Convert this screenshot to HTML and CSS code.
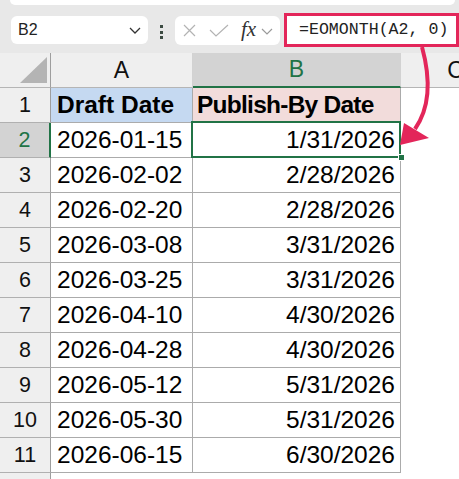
FILE: index.html
```html
<!DOCTYPE html>
<html>
<head>
<meta charset="utf-8">
<link rel="stylesheet" href="styles.css">
</head>
<body>
<div class="app">
  <div class="topstrip"></div>
  <div class="toolbar">
    <div class="namebox">
      <span class="ref">B2</span>
      <svg class="chev" width="12" height="7" viewBox="0 0 12 7"><path d="M1 1 L6 6 L11 1" fill="none" stroke="#333" stroke-width="1.3"/></svg>
    </div>
    <div class="dots"><i></i><i></i><i></i></div>
    <div class="fxbox">
      <svg class="ico" width="13" height="13" viewBox="0 0 13 13"><path d="M1 1 L12 12 M12 1 L1 12" stroke="#b3b3b3" stroke-width="1.2" fill="none"/></svg>
      <svg class="ico check" width="20" height="13" viewBox="0 0 20 13"><path d="M1 6 L7 12 L19 1" stroke="#b3b3b3" stroke-width="1.2" fill="none"/></svg>
      <span class="fx">fx</span>
      <svg class="chev2" width="12" height="7" viewBox="0 0 12 7"><path d="M1 1 L6 6 L11 1" fill="none" stroke="#9a9a9a" stroke-width="1.2"/></svg>
    </div>
    <div class="formula">=EOMONTH(A2, 0)</div>
  </div>
  <div class="sheet">
    <div class="corner"><span class="tri"></span></div>
    <div class="colh">A</div>
    <div class="colh sel">B</div>
    <div class="colh">C</div>

    <div class="rowh">1</div>
    <div class="cell hdr-a">Draft Date</div>
    <div class="cell hdr-b">Publish-By Date</div>
    <div class="blank"></div>

    <div class="rowh sel">2</div>
    <div class="cell">2026-01-15</div>
    <div class="cell num active">1/31/2026</div>
    <div class="blank"></div>

    <div class="rowh">3</div>
    <div class="cell">2026-02-02</div>
    <div class="cell num">2/28/2026</div>
    <div class="blank"></div>

    <div class="rowh">4</div>
    <div class="cell">2026-02-20</div>
    <div class="cell num">2/28/2026</div>
    <div class="blank"></div>

    <div class="rowh">5</div>
    <div class="cell">2026-03-08</div>
    <div class="cell num">3/31/2026</div>
    <div class="blank"></div>

    <div class="rowh">6</div>
    <div class="cell">2026-03-25</div>
    <div class="cell num">3/31/2026</div>
    <div class="blank"></div>

    <div class="rowh">7</div>
    <div class="cell">2026-04-10</div>
    <div class="cell num">4/30/2026</div>
    <div class="blank"></div>

    <div class="rowh">8</div>
    <div class="cell">2026-04-28</div>
    <div class="cell num">4/30/2026</div>
    <div class="blank"></div>

    <div class="rowh">9</div>
    <div class="cell">2026-05-12</div>
    <div class="cell num">5/31/2026</div>
    <div class="blank"></div>

    <div class="rowh">10</div>
    <div class="cell">2026-05-30</div>
    <div class="cell num">5/31/2026</div>
    <div class="blank"></div>

    <div class="rowh">11</div>
    <div class="cell">2026-06-15</div>
    <div class="cell num">6/30/2026</div>
    <div class="blank"></div>

    <div class="rowh"></div>
    <div class="blank"></div>
    <div class="blank"></div>
    <div class="blank"></div>
  </div>
  <svg class="arrow" width="459" height="479" viewBox="0 0 459 479">
    <path d="M422 47 C 430 76, 431 106, 415 129" fill="none" stroke="#e3265a" stroke-width="4"/>
    <polygon points="400,145 404,123 429,138" fill="#e3265a"/>
  </svg>
</div>
</body>
</html>
```
FILE: styles.css
```css
html, body {
  margin: 0;
  padding: 0;
}
body {
  width: 459px;
  height: 479px;
  overflow: hidden;
  background: #e8e8e8;
  font-family: "Liberation Sans", Arial, sans-serif;
}
.app {
  position: relative;
  width: 459px;
  height: 479px;
  overflow: hidden;
}
.topstrip {
  height: 5px;
  margin: 0 4px 0 10px;
  background: #ffffff;
  border-radius: 0 0 7px 7px;
}
.toolbar {
  height: 48px;
  box-sizing: border-box;
  padding-top: 11px;
  display: flex;
  align-items: flex-start;
}
.namebox {
  margin-left: 11px;
  width: 137px;
  height: 28px;
  box-sizing: border-box;
  background: #fff;
  border-radius: 6px;
  display: flex;
  align-items: center;
  padding: 0 7px 0 7px;
}
.ref {
  flex: 1;
  font-size: 16px;
  color: #222;
}
.chev {
  display: block;
}
.dots {
  width: 3px;
  margin: 9px 12px 0 12px;
  display: flex;
  flex-direction: column;
  gap: 2.5px;
}
.dots i {
  display: block;
  width: 3px;
  height: 3px;
  background: #3c4b42;
}
.fxbox {
  width: 105px;
  height: 29px;
  margin-left: 0;
  box-sizing: border-box;
  background: #fff;
  border-radius: 6px;
  display: flex;
  align-items: center;
  padding-left: 8px;
}
.ico {
  display: block;
}
.check {
  margin-left: 13px;
}
.fx {
  margin-left: 12px;
  font-family: "Liberation Serif", "Times New Roman", serif;
  font-style: italic;
  font-size: 21px;
  color: #333;
  line-height: 1;
  margin-top: -3px;
}
.chev2 {
  margin-left: 5px;
  margin-top: 2px;
  display: block;
}
.formula {
  margin-left: 4px;
  margin-top: -3px;
  width: 175px;
  height: 34px;
  box-sizing: border-box;
  border: 3px solid #e3265a;
  background: #fff;
  font-family: "Liberation Mono", "DejaVu Sans Mono", monospace;
  font-size: 16.6px;
  color: #222;
  padding-left: 12px;
  line-height: 28px;
  white-space: nowrap;
}
.sheet {
  display: grid;
  grid-template-columns: 51px 142px 208px 110px;
  grid-auto-rows: 35px;
  background: #fff;
}
.sheet > div {
  box-sizing: border-box;
}
.corner {
  background: #efefef;
  border-right: 1px solid #9e9e9e;
  border-bottom: 1px solid #b5b5b5;
  position: relative;
}
.tri {
  position: absolute;
  left: 20px;
  top: 4px;
  width: 27px;
  height: 26px;
  background: #b4b4b4;
  clip-path: polygon(100% 0, 100% 100%, 0 100%);
}
.colh {
  background: #efefef;
  border-right: 1px solid #d2d2d2;
  border-bottom: 1px solid #b5b5b5;
  display: flex;
  align-items: center;
  justify-content: center;
  font-size: 23px;
  color: #111;
}
.colh.sel {
  background: #d3d3d3;
  border-bottom: 2px solid #217346;
  color: #217346;
}
.rowh {
  background: #efefef;
  border-right: 1px solid #9e9e9e;
  border-bottom: 1px solid #b0b0b0;
  display: flex;
  align-items: center;
  justify-content: center;
  font-size: 21.5px;
  color: #111;
}
.rowh.sel {
  background: #d3d3d3;
  border-right: 2px solid #217346;
  color: #217346;
}
.cell {
  border-right: 1px solid #ababab;
  border-bottom: 1px solid #ababab;
  display: flex;
  align-items: center;
  padding: 0 6px;
  font-size: 24.5px;
  color: #000;
  white-space: nowrap;
  position: relative;
}
.cell.num {
  justify-content: flex-end;
  padding-right: 5px;
}
.hdr-a {
  background: #c5d9f1;
  font-weight: bold;
}
.hdr-b {
  background: #f2dcdb;
  font-weight: bold;
  padding-left: 4px;
  letter-spacing: -0.75px;
}
.active::after {
  content: "";
  position: absolute;
  top: -2px;
  left: -2px;
  right: -1px;
  bottom: -1px;
  border: 2px solid #217346;
}
.active::before {
  content: "";
  position: absolute;
  right: -4px;
  bottom: -3px;
  width: 5px;
  height: 5px;
  background: #217346;
  outline: 1px solid #fff;
  z-index: 2;
}
.blank {
  background: #fff;
}
.arrow {
  position: absolute;
  left: 0;
  top: 0;
  pointer-events: none;
}
```
